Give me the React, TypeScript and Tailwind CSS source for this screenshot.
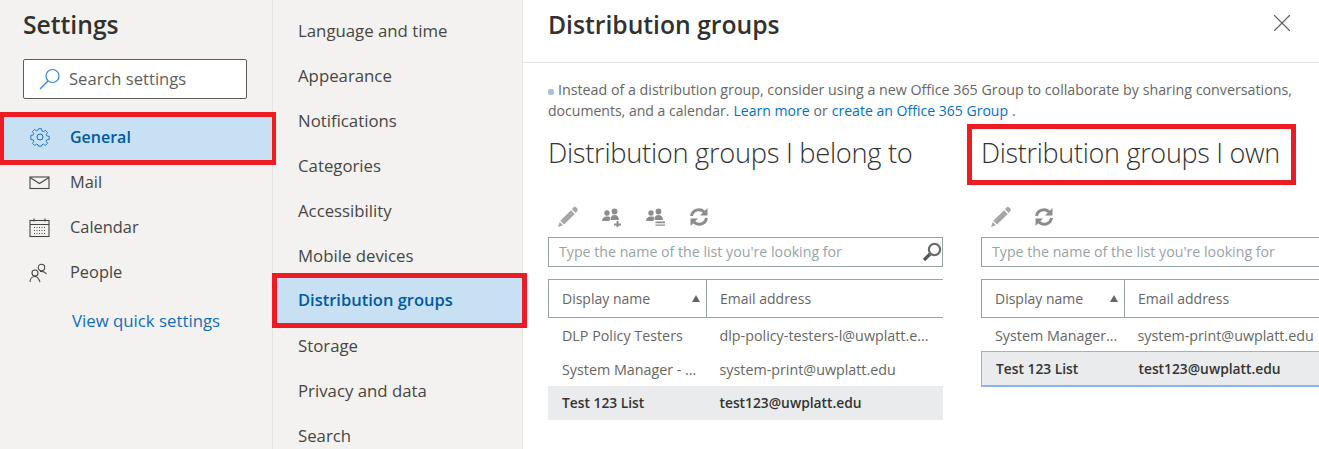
import React from "react";
import { X } from "lucide-react";

const font = "font-['Open_Sans','Noto_Sans',sans-serif]";

const navItems = ["General", "Mail", "Calendar", "People"];
const subItems = [
  "Language and time",
  "Appearance",
  "Notifications",
  "Categories",
  "Accessibility",
  "Mobile devices",
  "Distribution groups",
  "Storage",
  "Privacy and data",
  "Search",
];

function GearIcon() {
  return (
    <svg width="22" height="22" viewBox="0 0 22 22" fill="none" stroke="#106ebe" strokeWidth="1">
      <circle cx="11" cy="11" r="3" />
      <path d="M9.3 1.8h3.4l.5 2.6 1.6.7 2.2-1.5 2.4 2.4-1.5 2.2.7 1.6 2.6.5v3.4l-2.6.5-.7 1.6 1.5 2.2-2.4 2.4-2.2-1.5-1.6.7-.5 1.6H9.3l-.5-1.6-1.6-.7-2.2 1.5-2.4-2.4 1.5-2.2-.7-1.6-2.6-.5V9.3l2.6-.5.7-1.6-1.5-2.2 2.4-2.4 2.2 1.5 1.6-.7z" transform="translate(1.1 1.1) scale(.9)" />
    </svg>
  );
}

function MailIcon() {
  return (
    <svg width="22" height="14" viewBox="0 0 22 14" fill="none" stroke="#484644" strokeWidth="1.1">
      <rect x="1" y="1" width="19" height="11.5" />
      <path d="M1 1.5l9.5 6 9.5-6" />
    </svg>
  );
}

function CalendarIcon() {
  return (
    <svg width="22" height="20" viewBox="0 0 22 20" fill="none" stroke="#484644" strokeWidth="1.1">
      <rect x="1" y="2.5" width="19" height="16" />
      <path d="M1 6.5h19M5 .5v3M16 .5v3" />
      <path d="M5 9.5h12M5 12.5h12M5 15.5h12" strokeDasharray="1 1.5" />
    </svg>
  );
}

function PeopleIcon() {
  return (
    <svg width="20" height="20" viewBox="0 0 20 20" fill="none" stroke="#484644" strokeWidth="1.1">
      <circle cx="12.5" cy="4.5" r="3.2" />
      <circle cx="6" cy="10" r="3" />
      <path d="M1 19c0-3 2-5.5 5-5.5s4 2.5 5 5.5M11 8.5c3-.5 5 .5 6.5 2.5" />
    </svg>
  );
}

function PencilIcon() {
  return (
    <svg width="22" height="22" viewBox="0 0 22 22" fill="#a6a6a6">
      <path d="M16.5 1.5a2 2 0 0 1 2.8 0l.9.9a2 2 0 0 1 0 2.8L18.6 7 15 3.2z" />
      <path d="M14 4.2l3.7 3.7L7 18.5 3.3 14.8z" />
      <path d="M2.7 16l3.2 3.2L1 21z" />
    </svg>
  );
}

function PersonGroup({ mark }: { mark: "plus" | "minus" }) {
  return (
    <svg width="22" height="20" viewBox="0 0 22 20" fill="#8c8c8c">
      <circle cx="6" cy="6" r="2.7" />
      <path d="M1 14c0-3 2-4.5 5-4.5 1.5 0 2.5.4 3.3 1l-.8 3.5z" />
      <circle cx="13.5" cy="4.5" r="2.9" />
      <path d="M9.5 13c0-3 1.2-5 4-5s4.5 2 4.5 5z" />
      {mark === "plus" ? (
        <path d="M15.5 14h2v2.5H20v2h-2.5V20h-2v-1.5H13v-2h2.5z" />
      ) : (
        <path d="M10.5 14.5H20v1.7h-9.5zM10.5 17.5H20v1.2h-9.5z" />
      )}
    </svg>
  );
}

function RefreshIcon() {
  return (
    <svg width="20" height="20" viewBox="0 0 20 20" fill="none" stroke="#8c8c8c" strokeWidth="3">
      <path d="M2.5 9a7.5 7.5 0 0 1 12.5-4.2" />
      <path d="M17.5 11a7.5 7.5 0 0 1-12.5 4.2" />
      <path d="M18.5 1v7.5h-7.5z" fill="#8c8c8c" stroke="none" />
      <path d="M1.5 19v-7.5H9z" fill="#8c8c8c" stroke="none" />
    </svg>
  );
}

function SearchGlyph() {
  return (
    <svg width="20" height="20" viewBox="0 0 20 20" fill="none">
      <circle cx="12.5" cy="7.5" r="5.6" stroke="#6a6a6a" strokeWidth="2.2" />
      <path d="M8 12l-6 6" stroke="#555" strokeWidth="3.2" />
    </svg>
  );
}

type Row = { name: string; email: string; selected?: boolean };

function GroupList({
  title,
  tools,
  rows,
  widthClass,
  nameColClass,
  outlined,
  boxed,
}: {
  title: string;
  tools: React.ReactNode;
  rows: Row[];
  widthClass: string;
  nameColClass: string;
  outlined?: boolean;
  boxed?: boolean;
}) {
  return (
    <div className={`${widthClass} shrink-0`}>
      <div className={`h-[61px] pb-[2px] flex items-center font-light text-[#333] whitespace-nowrap tracking-[-0.3px] ${boxed ? "text-[27px] border-[5px] border-[#ed1c24] -ml-[14px] pl-[9px] w-[329px]" : "text-[27.3px]"}`}>
        {title}
      </div>
      <div className="h-[52px] pt-[12px] flex items-center gap-[22px] pl-[9px]">{tools}</div>
      <div className="h-[30px] border border-[#98a3a6] flex items-center justify-between pl-[10px] text-[14.2px] text-[#98a3a6] overflow-hidden">
        <span className="whitespace-nowrap">Type the name of the list you're looking for</span>
        <span className="shrink-0"><SearchGlyph /></span>
      </div>
      <div className="mt-[12px] h-[39px] border border-r-0 border-[#98a3a6] flex items-center text-[14px] text-[#666]">
        <div className={`${nameColClass} h-full shrink-0 border-r border-[#98a3a6] flex items-center justify-between pl-[13px] pr-[6px]`}>
          <span>Display name</span>
          <span className="w-0 h-0 border-x-[4px] border-x-transparent border-b-[7px] border-b-[#666]" />
        </div>
        <div className="pl-[13px]">Email address</div>
      </div>
      <div className="pt-[1px]">
        {rows.map((row) => (
          <div
            key={row.email}
            className={`flex items-center whitespace-nowrap ${
              row.selected
                ? `bg-[#eaebed] text-[#333] font-semibold text-[13.8px] ${outlined ? "border border-b-2 border-[#8ab4f0] -mt-[2px] h-[36px] pt-[2px]" : "h-[33.5px] pt-[1px]"}`
                : "h-[33.5px] text-[14.3px] text-[#666]"
            }`}
          >
            <div className={`${nameColClass} shrink-0 pl-[14px] overflow-hidden`}>{row.name}</div>
            <div className="pl-[13.5px]">{row.email}</div>
          </div>
        ))}
      </div>
    </div>
  );
}

export default function App() {
  return (
    <div className={`${font} flex w-[1319px] h-[449px] overflow-hidden bg-white`}>
      <aside className="w-[273px] shrink-0 bg-[#f3f2f1] border-r border-[#e6e4e2] relative z-10">
        <h1 className="h-[50px] pl-[23px] flex items-center text-[24.7px] font-semibold text-[#323130]">Settings</h1>
        <div className="ml-[23px] mt-[9px] w-[224px] h-[40px] bg-white border border-[#605e5c] rounded-[2px] flex items-center pl-[14px] gap-[7px] text-[16.6px] text-[#605e5c]">
          <svg width="24" height="24" viewBox="0 0 24 24" fill="none" stroke="#2b88d8" strokeWidth="1.2">
            <circle cx="14.5" cy="9" r="6.5" />
            <path d="M10 14l-8 8" />
          </svg>
          Search settings
        </div>
        <nav className="mt-[13px]">
          {navItems.map((item, i) => (
            <div
              key={item}
              className={
                i === 0
                  ? "w-[276px] h-[53px] -mb-[5px] pb-[3px] border-[#ed1c24] border-x-[4px] border-y-[5px] bg-[#c7e0f4] flex items-center pl-[25px] text-[#005a9e] font-semibold text-[16px]"
                  : "h-[45px] flex items-center pl-[29px] text-[16.4px] text-[#484644]"
              }
            >
              <span className="w-[41px] shrink-0 flex items-center">
                {i === 0 && <GearIcon />}
                {i === 1 && <MailIcon />}
                {i === 2 && <CalendarIcon />}
                {i === 3 && <PeopleIcon />}
              </span>
              {item}
            </div>
          ))}
        </nav>
        <div className="pl-[72px] mt-[13px] text-[16.8px] text-[#106ebe]">View quick settings</div>
      </aside>
      <div className="w-[250px] shrink-0 bg-[#f3f2f1] border-r border-[#e6e4e2] pt-[8px]">
        {subItems.map((item) => (
          <div
            key={item}
            className={
              item === "Distribution groups"
                ? "-ml-[1px] w-[255px] h-[55px] -my-[5px] relative z-20 border-[5px] border-[#ed1c24] bg-[#c7e0f4] flex items-center pl-[21px] text-[16.5px] font-semibold text-[#005a9e]"
                : "h-[45px] flex items-center pl-[25px] text-[16.8px] text-[#484644]"
            }
          >
            {item}
          </div>
        ))}
      </div>
      <main className="flex-1 min-w-0">
        <header className="h-[63px] border-b border-[#e6e4e2] flex items-start justify-between pl-[25px] pr-[22px]">
          <h2 className="h-[50px] flex items-center text-[24.7px] font-semibold text-[#323130]">Distribution groups</h2>
          <X className="mt-[8px]" size={30} strokeWidth={0.9} color="#605e5c" />
        </header>
        <div className="pl-[25px]">
          <div className="pt-[16px] w-[770px] leading-[21px] text-[#666]">
            <p className="text-[14.25px]">
              <span className="inline-block w-[6px] h-[6px] mr-[4px] rounded-[2px] bg-[#a9c2da]" />
              Instead of a distribution group, consider using a new Office 365 Group to collaborate by sharing conversations,
            </p>
            <p className="flex gap-[4px] text-[14.05px]">
              <span>documents, and a calendar.</span>
              <span className="text-[#0072c6]">Learn more</span>
              <span>or</span>
              <span className="text-[#0072c6]">create an Office 365 Group</span>
              <span>.</span>
            </p>
          </div>
          <div className="mt-[3px] flex gap-[38px]">
            <GroupList
              title="Distribution groups I belong to"
              widthClass="w-[395px]"
              nameColClass="w-[158px]"
              tools={
                <>
                  <PencilIcon />
                  <PersonGroup mark="plus" />
                  <PersonGroup mark="minus" />
                  <RefreshIcon />
                </>
              }
              rows={[
                { name: "DLP Policy Testers", email: "dlp-policy-testers-l@uwplatt.e..." },
                { name: "System Manager - ...", email: "system-print@uwplatt.edu" },
                { name: "Test 123 List", email: "test123@uwplatt.edu", selected: true },
              ]}
            />
            <GroupList
              title="Distribution groups I own"
              widthClass="w-[358px]"
              nameColClass="w-[143px]"
              boxed
              outlined
              tools={
                <>
                  <PencilIcon />
                  <RefreshIcon />
                </>
              }
              rows={[
                { name: "System Manager...", email: "system-print@uwplatt.edu" },
                { name: "Test 123 List", email: "test123@uwplatt.edu", selected: true },
              ]}
            />
          </div>
        </div>
      </main>
    </div>
  );
}
